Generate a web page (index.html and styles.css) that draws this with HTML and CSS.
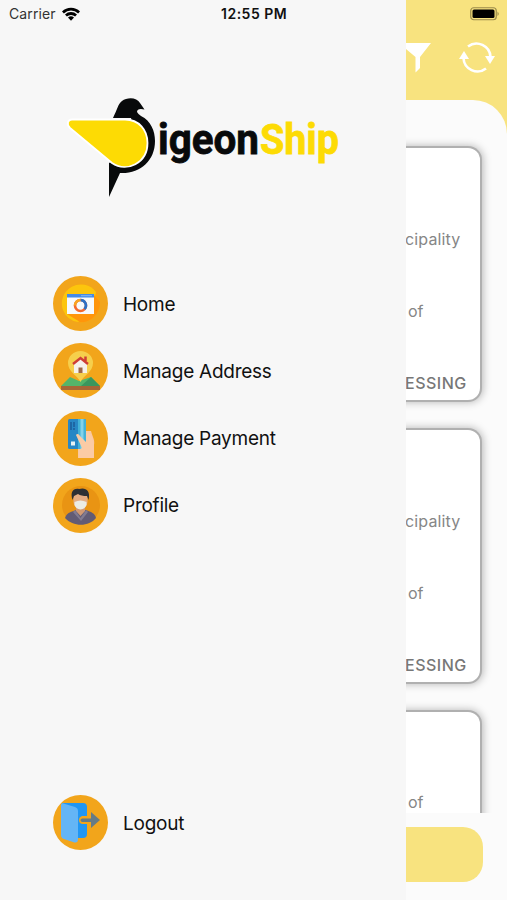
FILE: index.html
```html
<!DOCTYPE html>
<html lang="en">
<head>
  <meta charset="UTF-8" />
  <meta name="viewport" content="width=device-width, initial-scale=1.0"/>
  <title>PigeonShip</title>
  <link rel="stylesheet" href="styles.css">
</head>
<body>

  <!-- Side menu -->
  <div class="drawer">
    <div class="status-bar">
      <span class="carrier">Carrier</span>
      <svg class="wifi" viewBox="0 0 18 14">
        <path d="M0 4.4a13 13 0 0 1 18 0l-1.9 2a10.300 10.300 0 0 0-14.200 0z"/>
        <path d="M3 7.500a8.700 8.700 0 0 1 12 0l-1.900 2a6 6 0 0 0-8.200 0z"/>
        <path d="M6 10.600a4.400 4.400 0 0 1 6 0l-3 3.100z"/>
      </svg>
      <span class="time">12:55 PM</span>
    </div>

    <svg class="logo" viewBox="0 0 290 110">
      <path fill="#080a0b" d="M45 21C49 13 50 7 54 4C59 0 69 0 72 6L76.500 12.500Q69 11 69 15Q70 17 73 19C83 24 87 34 87 44C87 64 72 77 52 76L41 100V66L70 50L63 21Z"/>
      <path fill="#fddb04" stroke="#fff" stroke-width="1.800" d="M4 22.500H57C71 22.500 79.500 33 79.500 46C79.500 66 59 76 44 66L2 31C-2 27 0 22.500 4 22.500Z"/>
      <text x="90" y="57" textLength="101" lengthAdjust="spacingAndGlyphs" fill="#080a0b" stroke="#080a0b">igeon</text>
      <text x="192" y="57" textLength="79" lengthAdjust="spacingAndGlyphs" fill="#fddb04" stroke="#fddb04">Ship</text>
    </svg>

    <div class="menu">
      <div class="menu-item">
        <svg class="menu-icon" viewBox="0 0 55 55">
          <circle cx="27.500" cy="27.500" r="27.500" fill="#f2a51b"/>
          <circle cx="28" cy="27.500" r="19" fill="#ffa30b"/>
          <path d="M10 34A19 19 0 0 1 43 16L38 38L25 46A19 19 0 0 1 10 34Z" fill="#fcc50d"/>
          <path d="M14 38H41V19L47 26C47 38 37 47 27 46Z" fill="#ff950b"/>
          <rect x="14" y="18" width="27" height="20" fill="#f7f9fb"/>
          <rect x="14" y="18" width="27" height="3.500" fill="#458be8"/>
          <path d="M28 19.700h11" stroke="#83b7f3"/>
          <circle cx="27.500" cy="29.500" r="5.500" fill="none" stroke="#f5682d" stroke-width="2.600"/>
          <path d="M27.500 24a5.500 5.500 0 0 1 4 9.200" fill="none" stroke="#2c70c7" stroke-width="2.600"/>
          <path d="M22 29.500a5.500 5.500 0 0 1 5.500-5.500" fill="none" stroke="#f8a520" stroke-width="2.600"/>
        </svg>
        <span>Home</span>
      </div>
      <div class="menu-item">
        <svg class="menu-icon" viewBox="0 0 55 55">
          <circle cx="27.500" cy="27.500" r="27.500" fill="#f2a51b"/>
          <path d="M8 43L17 34L26 38L38 34L47 43Z" fill="#54b46a"/>
          <path d="M28 43L38 34L47 43Z" fill="#3b965d"/>
          <path d="M8 43H47V47H8Z" fill="#a76636"/>
          <path d="M27.500 39C24 32 15 29 15 20A12.500 12 0 0 1 40 20C40 29 31 32 27.500 39Z" fill="#f6cf4c"/>
          <path d="M21 20L27.500 14L34 20V30H21Z" fill="#f5f1eb"/>
          <path d="M20 21L27.500 15L35 21M32.500 18V13.500" fill="none" stroke="#cf3e35" stroke-width="2.500"/>
          <rect x="25.500" y="24.500" width="4" height="5.500" fill="#9e6646"/>
        </svg>
        <span>Manage Address</span>
      </div>
      <div class="menu-item">
        <svg class="menu-icon" viewBox="0 0 55 55">
          <circle cx="27.500" cy="27.500" r="27.500" fill="#f2a51b"/>
          <path d="M29 20L38 20C40 27 42 29 41 34V47H25V38L22 32Z" fill="#fac8a1"/>
          <rect x="15" y="8" width="18" height="30" rx="1.500" fill="#2787c5"/>
          <path d="M25 8h6.500q1.500 0 1.500 1.500v27q0 1.500-1.500 1.500H25z" fill="#43b2d8"/>
          <path d="M27.500 8h3v30h-3z" fill="#83d2e9"/>
          <path d="M18 11v8M21 11v5M21 17v2" stroke="#1b5c99" stroke-width="1.500"/>
          <rect x="18" y="30.500" width="4" height="4" fill="#e6f1f3"/>
          <path d="M23 24C24 22 26 23 27 25L33 31V22L38 23L41 33V47H26V39L29 37Z" fill="#fbcba5"/>
        </svg>
        <span>Manage Payment</span>
      </div>
      <div class="menu-item">
        <svg class="menu-icon" viewBox="0 0 55 55">
          <circle cx="27.500" cy="27.500" r="27.500" fill="#f2a51b"/>
          <circle cx="28" cy="27" r="19" fill="#e99413"/>
          <path d="M12 40C14 34 19 34 23 32H33C38 34 42 35 43 40C36 49 20 49 12 40Z" fill="#625b74"/>
          <path d="M22 32L27.500 40L33 32L35 34L28 43L20 34Z" fill="#827b91"/>
          <path d="M23 29h9v4l-4.500 5-4.500-5z" fill="#d39a73"/>
          <path d="M20.500 18Q27.500 12 34.500 18V24Q34 30 27.500 31Q21 30 20.500 24Z" fill="#e4ad84"/>
          <path d="M21.500 24Q27.500 21 33.500 24V27Q32 31 27.500 31.500Q23 31 21.500 27Z" fill="#ecece5"/>
          <path d="M19.500 22C17 14 20 10 26 11C32 9 38 12 35.500 22L34 18Q28 18 25 16L21 18Z" fill="#2d3034"/>
        </svg>
        <span>Profile</span>
      </div>
    </div>

    <div class="menu-item logout">
      <svg class="menu-icon" viewBox="0 0 55 55">
        <circle cx="27.500" cy="27.500" r="27.500" fill="#f2a51b"/>
        <path d="M9 8H30Q34 8 34 12V21H29Q26 22 26 25Q26 29 30 29H34V39Q34 43 30 43H24L9 35Z" fill="#2196f3"/>
        <path d="M8 10Q8 7 12 9L22 12Q25 13 25 16V44Q25 49 20 47L11 44Q8 43 8 40Z" fill="#64b5f6"/>
        <path d="M29 23.500H38V17L47 25L38 33V27H29Q27.500 26.500 27.500 25.200Q27.500 24 29 23.500Z" fill="#667b86"/>
      </svg>
      <span>Logout</span>
    </div>
  </div>

  <!-- Orders screen, pushed aside by the menu -->
  <div class="screen">
    <div class="top">
      <svg class="battery" viewBox="0 0 30 14">
        <rect x=".75" y=".75" width="25.500" height="12" rx="3" fill="none" stroke="#9a8b4b" stroke-width="1.200"/>
        <rect x="2.500" y="2.500" width="22" height="8.500" rx="1.500"/>
        <path d="M27.500 4.500q2.500 2.300 0 4.600z" fill="#9a8b4b"/>
      </svg>
      <div class="toolbar">
        <svg class="filter" viewBox="0 0 25 30"><path d="M-7 0H25L14 14V25L9.500 29.500V14Z" fill="#fff"/></svg>
        <svg class="refresh" viewBox="0 0 36 32">
          <path d="M9 4.500A14 14 0 0 1 31.500 15M27 26.500A14 14 0 0 1 4.500 16" fill="none" stroke="#fff" stroke-width="2.600"/>
          <path d="M0 17L5 9L10 17ZM26 14H36L31 22Z" fill="#fff"/>
        </svg>
      </div>
    </div>
    <div class="sheet">
      <div class="orders">
        <div class="order">
          <p class="city">cipality</p>
          <p class="detail">of</p>
          <p class="state">ESSING</p>
        </div>
        <div class="order">
          <p class="city">cipality</p>
          <p class="detail">of</p>
          <p class="state">ESSING</p>
        </div>
        <div class="order short">
          <p class="detail">of</p>
        </div>
      </div>
      <div class="footer"><div class="new-order"></div></div>
    </div>
  </div>

</body>
</html>
```
FILE: styles.css
```css
* {
  margin: 0;
  padding: 0;
  box-sizing: border-box;
}

body {
  font-family: Inter, "Liberation Sans", sans-serif;
  background-color: #f7f7f7;
  color: #111;
  width: 100%;
  height: 100vh;
  display: flex;
  overflow: hidden;
}

svg {
  display: block;
  flex-shrink: 0;
}

.drawer {
  width: 406px;
  flex-shrink: 0;
  background: #f7f7f7;
  display: flex;
  flex-direction: column;
}

.status-bar {
  display: flex;
  align-items: center;
  height: 27px;
  padding-left: 9px;
}

.carrier {
  font-size: 14px;
  letter-spacing: 0.1px;
  width: 47px;
  color: #333;
}

.wifi {
  width: 18px;
  height: 14px;
  margin-left: 6px;
}

.time {
  font-size: 14px;
  font-weight: 600;
  letter-spacing: 0.5px;
  margin-left: 141px;
  white-space: nowrap;
}

.logo {
  width: 290px;
  height: 110px;
  margin: 70px 0 0 68px;
  font-family: Roboto, sans-serif;
  font-size: 43px;
  font-weight: 700;
  stroke-width: 0.8px;
  overflow: visible;
}

.logo path {
  stroke-linejoin: round;
}

.menu {
  display: flex;
  flex-direction: column;
  gap: 12.3px;
  margin-top: 69px;
}

.menu-item {
  display: flex;
  align-items: center;
  gap: 15px;
  height: 55px;
  padding-left: 53px;
  font-size: 19px;
  letter-spacing: -0.25px;
}

.menu-item span {
  padding-top: 1px;
}

.menu-icon {
  width: 55px;
  height: 55px;
}

.logout {
  margin-top: auto;
  margin-bottom: 50px;
}

.screen {
  flex: 1;
  min-width: 0;
  display: flex;
  flex-direction: column;
  background: #f8e37f;
  overflow: hidden;
}

.top {
  height: 100px;
  padding-top: 7px;
}

.battery {
  width: 30px;
  height: 14px;
  margin-left: 64px;
}

.toolbar {
  display: flex;
  align-items: center;
  gap: 28px;
  margin-top: 21px;
}

.filter {
  width: 25px;
  height: 30px;
}

.refresh {
  width: 36px;
  height: 32px;
}

.sheet {
  flex: 1;
  min-height: 0;
  display: flex;
  flex-direction: column;
  background: #fbfbfb;
  border-top-right-radius: 34px;
}

.orders {
  height: 713px;
  padding: 46px 25px 0 0;
  overflow: hidden;
  display: flex;
  flex-direction: column;
  gap: 26px;
}

.order {
  height: 256px;
  flex-shrink: 0;
  margin-left: -20px;
  padding: 79px 0 0 20px;
  background: #fff;
  border: 2px solid #b0b0b0;
  border-left: none;
  border-radius: 0 14px 14px 0;
  box-shadow: 1px 0 9px rgba(0, 0, 0, 0.28);
  color: #868686;
  font-size: 16px;
  line-height: 24px;
}

.order.short {
  padding-top: 78px;
}

.city {
  margin: 0 0 48px -1px;
  letter-spacing: 0.15px;
}

.detail {
  margin: 0 0 48px 2px;
}

.state {
  margin-left: -1px;
  font-weight: 500;
  letter-spacing: 0.5px;
  color: #777;
}

.footer {
  padding: 14px 24px 0 0;
}

.new-order {
  height: 55px;
  background: #f8e37f;
  border-radius: 0 20px 20px 0;
}
```
